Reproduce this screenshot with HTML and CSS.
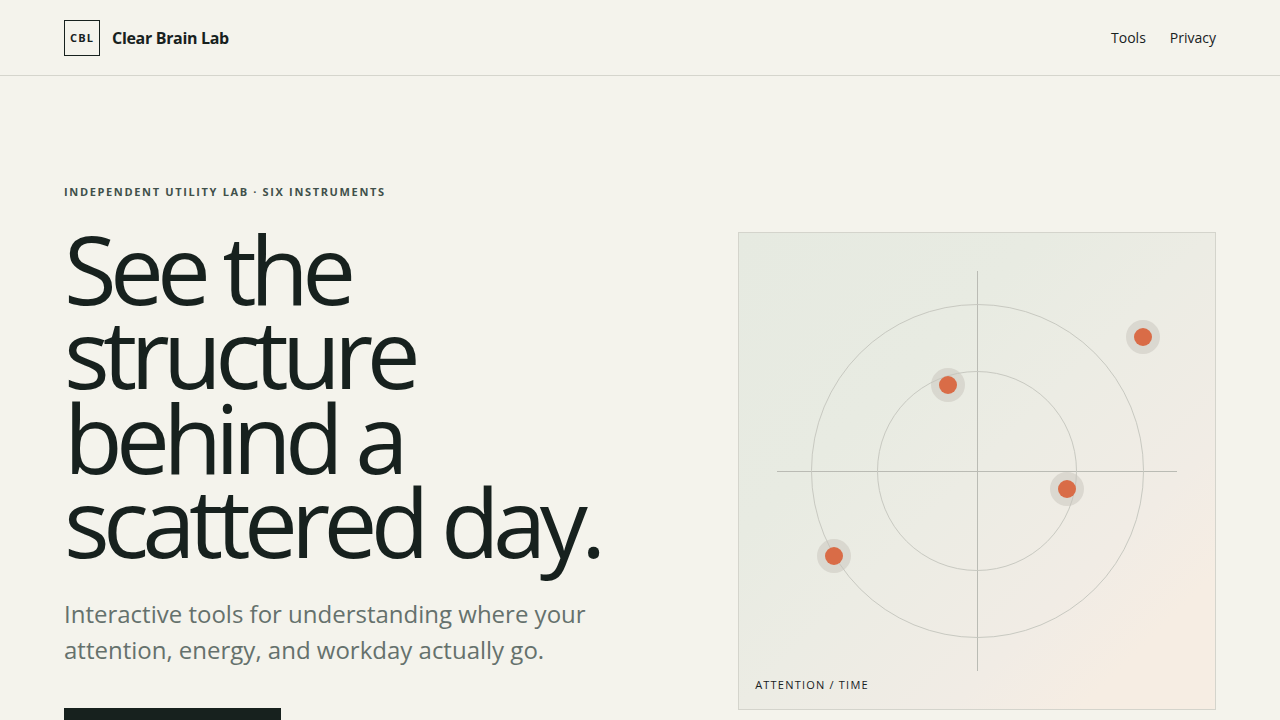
FILE: index.html
```html
<!DOCTYPE html>
<html lang="en">
<head>
<meta charset="utf-8">
<meta name="viewport" content="width=device-width, initial-scale=1">
<title>Clear Brain Lab</title>
<link rel="stylesheet" href="styles.css">
</head>
<body>
<header class="site-header">
  <a class="brand" href="#"><span class="brand-mark">CBL</span><span class="brand-name">Clear Brain Lab</span></a>
  <nav class="nav"><a href="#">Tools</a><a href="#">Privacy</a></nav>
</header>
<main class="hero">
  <div class="copy">
    <p class="eyebrow">Independent utility lab · Six instruments</p>
    <h1 class="title">See the structure behind a scattered day.</h1>
    <p class="lead">Interactive tools for understanding where your attention, energy, and workday actually go.</p>
    <a class="action" href="#"></a>
  </div>
  <div class="map">
    <span class="axis axis-x"></span>
    <span class="axis axis-y"></span>
    <span class="orbit orbit-outer"></span>
    <span class="orbit orbit-inner"></span>
    <span class="node node-a"></span>
    <span class="node node-b"></span>
    <span class="node node-c"></span>
    <span class="node node-d"></span>
    <span class="map-label">Attention / Time</span>
  </div>
</main>
</body>
</html>
```
FILE: styles.css
```css
* { box-sizing: border-box; }
body {
  margin: 0;
  background: #f4f3ec;
  color: #17211e;
  font-family: "Open Sans", "Noto Sans", sans-serif;
  font-size: 16px;
}
a { color: inherit; text-decoration: none; }
.site-header {
  display: flex;
  align-items: center;
  justify-content: space-between;
  min-height: 76px;
  padding: 0 5vw;
  border-bottom: 1px solid #d5d5cd;
}
.brand { display: flex; align-items: center; gap: 12px; }
.brand-mark {
  display: grid;
  place-items: center;
  width: 36px;
  height: 36px;
  border: 1px solid #17211e;
  font-size: 11px;
  font-weight: 700;
  letter-spacing: 0.1em;
}
.brand-name { font-weight: 700; letter-spacing: -0.02em; }
.nav { display: flex; gap: 24px; font-size: 14px; }
.hero {
  display: grid;
  grid-template-columns: 1.25fr 1fr;
  gap: 6vw;
  align-items: center;
  padding: 108px 5vw;
}
.eyebrow {
  margin: 0 0 26px;
  color: #40504a;
  font-size: 11px;
  line-height: 16px;
  font-weight: 700;
  letter-spacing: 0.15em;
  text-transform: uppercase;
}
.title {
  max-width: 600px;
  margin: 0 0 32px;
  font-size: 96px;
  line-height: 0.88;
  font-weight: 400;
  letter-spacing: -0.07em;
}
.lead {
  max-width: 560px;
  margin: 0 0 40px;
  color: #65716c;
  font-size: 24px;
  line-height: 36px;
}
.action {
  display: block;
  width: 217px;
  height: 50px;
  background: #17211e;
}
.map {
  position: relative;
  aspect-ratio: 1;
  border: 1px solid #d4d4cc;
  background: linear-gradient(135deg, #e6eae1 0%, #e8ebe2 32%, #ecece4 50%, #f1ece5 72%, #f6ede3 86%);
}
.axis, .orbit, .node, .map-label { position: absolute; }
.axis { background: #babbb4; }
.axis-x { left: 8%; right: 8%; top: 50%; height: 1px; }
.axis-y { top: 8%; bottom: 8%; left: 50%; width: 1px; }
.orbit { border: 1px solid #c8c9c1; border-radius: 50%; }
.orbit-outer { inset: 15%; }
.orbit-inner { inset: 29%; }
.node {
  width: 18px;
  height: 18px;
  border-radius: 50%;
  background: #d96c47;
  box-shadow: 0 0 0 8px rgba(200, 196, 188, 0.5);
}
.node-a { left: 42%; top: 30%; }
.node-b { left: 83%; top: 20%; }
.node-c { left: 67%; top: 52%; }
.node-d { left: 18%; top: 66%; }
.map-label {
  left: 16px;
  bottom: 16px;
  font-size: 11px;
  line-height: 16px;
  letter-spacing: 0.11em;
  text-transform: uppercase;
}
```
